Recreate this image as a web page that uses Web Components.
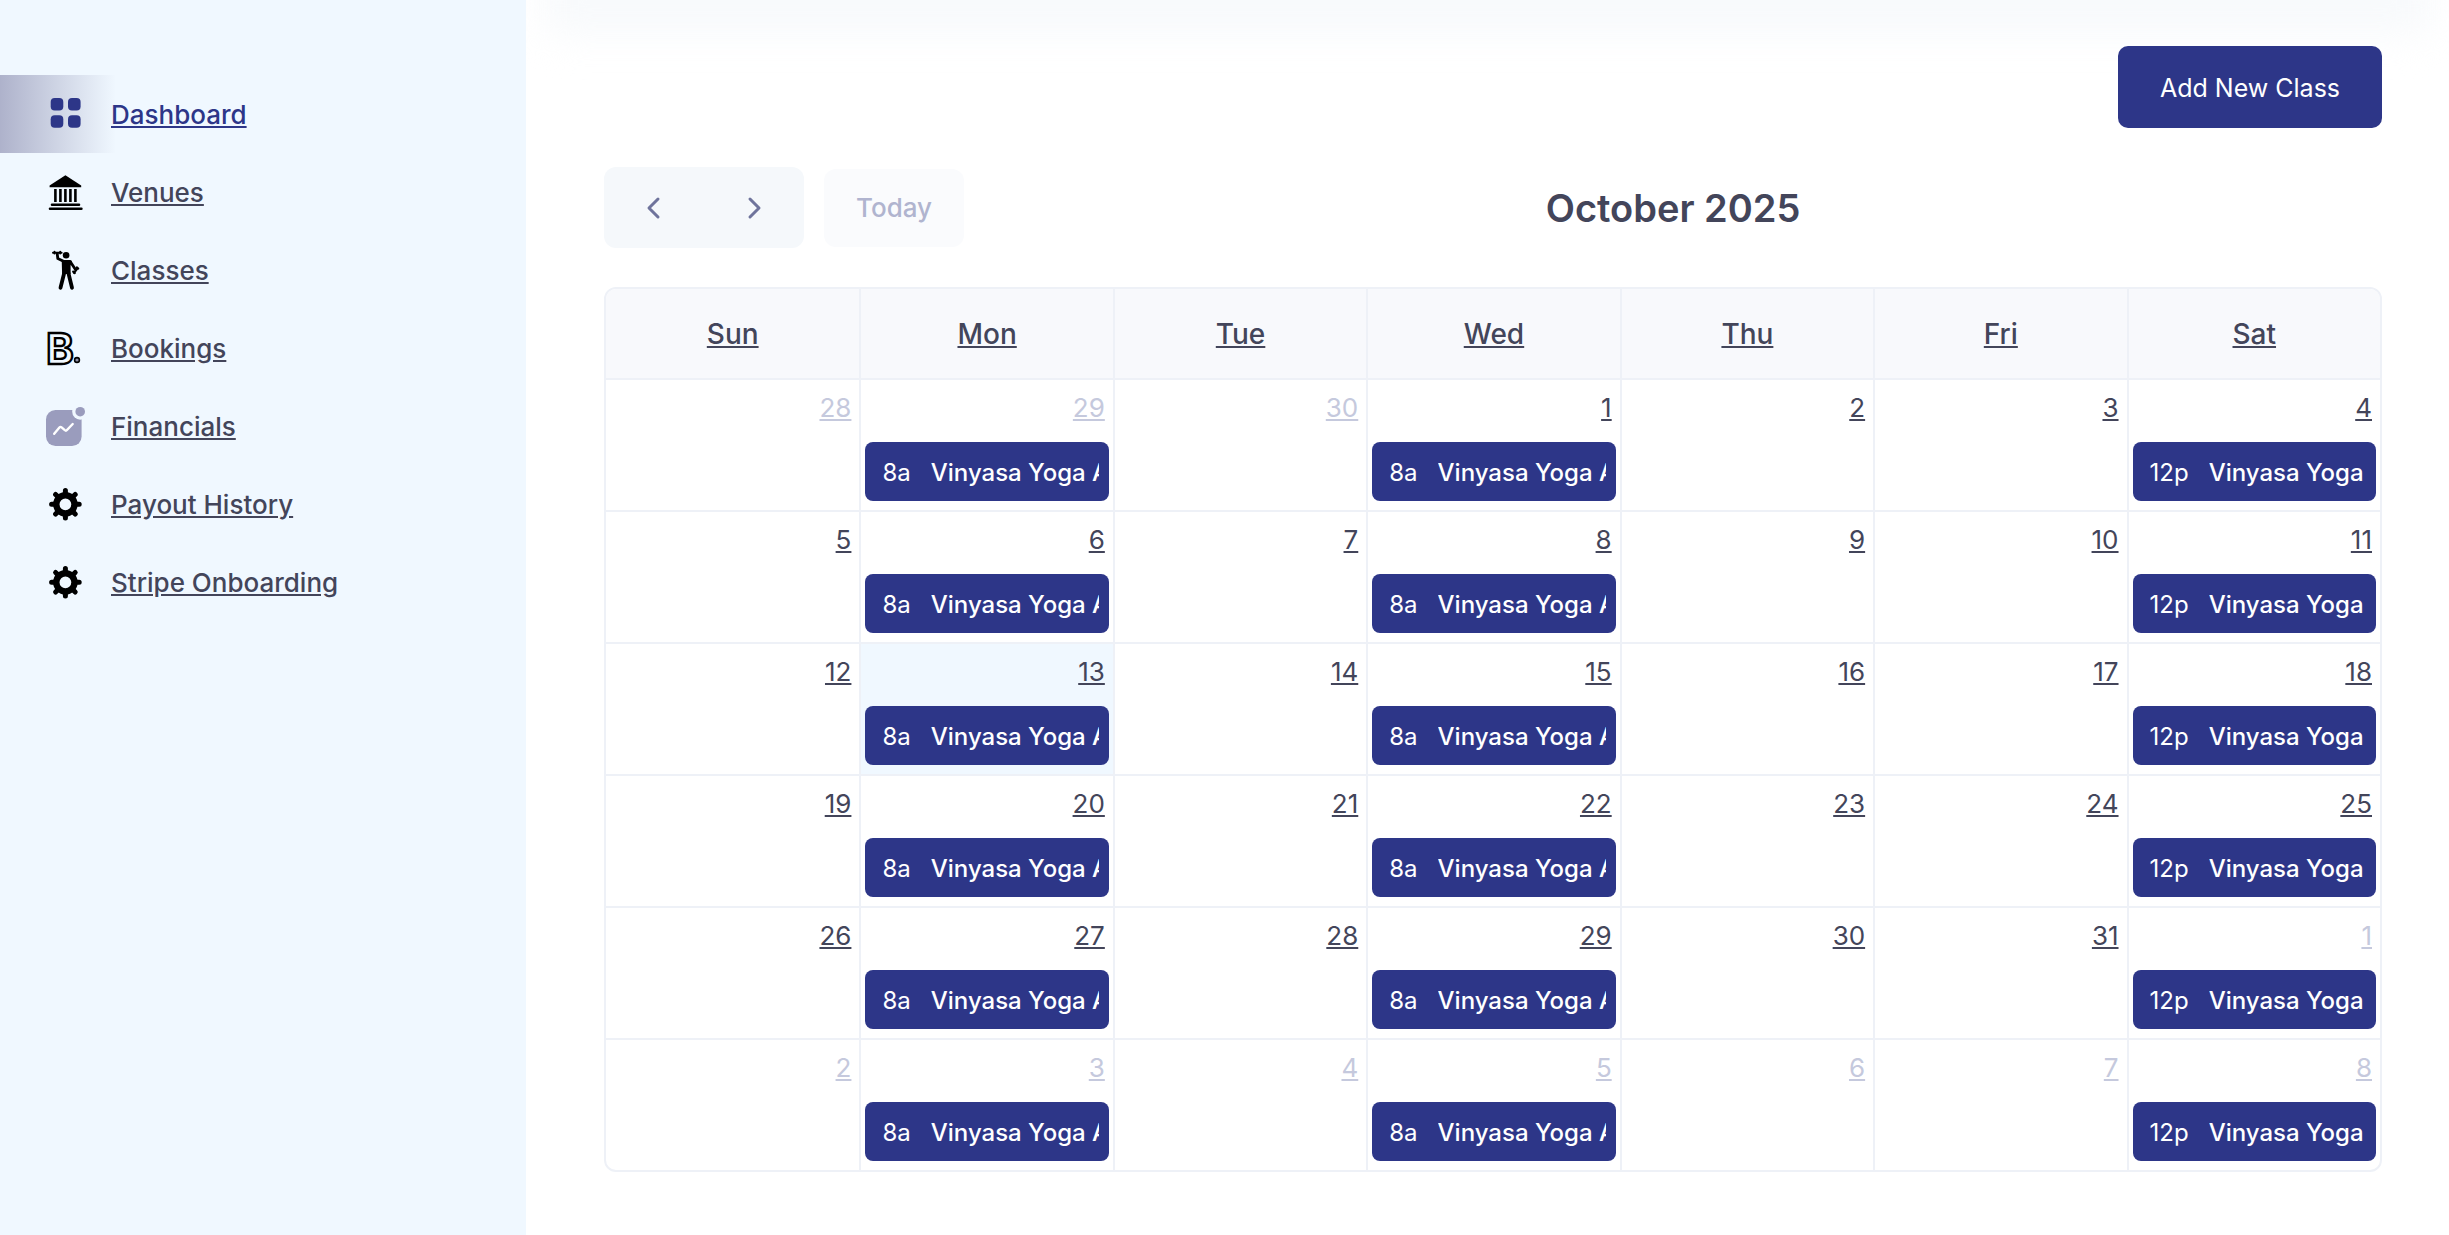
<!DOCTYPE html>
<html lang="en">
<head>
<meta charset="utf-8">
<title>Classes</title>
<style>
  body {
    margin: 0;
    font: 400 26px/32px Inter, "Liberation Sans", sans-serif;
    color: #43455a;
    background: #fff;
    --navy: #2d3688;
    --sky: #f0f8ff;
    --line: #eef1f7;
    --muted: #c5c9dd;
  }
</style>
</head>
<body>
<app-shell>
  <side-nav slot="side">
    <nav-item icon="grid" active>Dashboard</nav-item>
    <nav-item icon="venue">Venues</nav-item>
    <nav-item icon="trainer">Classes</nav-item>
    <nav-item icon="booking">Bookings</nav-item>
    <nav-item icon="chart">Financials</nav-item>
    <nav-item icon="gear">Payout History</nav-item>
    <nav-item icon="gear">Stripe Onboarding</nav-item>
  </side-nav>
  <primary-button>Add New Class</primary-button>
  <calendar-toolbar>October 2025</calendar-toolbar>
  <month-calendar year="2025" month="10" today="13"></month-calendar>
</app-shell>

<script>
const ICONS = {
  grid: `
    <g fill="#2d3688">
      <rect x="4.7" y="4" width="12.6" height="12.6" rx="4"/>
      <rect x="22" y="4" width="12.6" height="12.6" rx="4"/>
      <rect x="4.7" y="21.2" width="12.6" height="12.6" rx="4"/>
      <rect x="22" y="21.2" width="12.6" height="12.6" rx="4"/>
    </g>`,
  venue: `
    <path d="M19.4 3.2 35.2 13.6v1.6H3.6v-1.6z"/>
    <path d="M9.4 17v13M14.4 17v13M19.4 17v13M24.4 17v13M29.4 17v13" stroke="#000" stroke-width="2.6"/>
    <path d="M6 32.7h27M4 36.7h31.4" stroke="#000" stroke-width="2.6" stroke-linecap="round"/>`,
  trainer: `
    <circle cx="20.1" cy="5.3" r="3.3"/>
    <path d="M15.7 10h8.2c1.3 0 2 .8 2 2l-1.3 3.5V24h-8.5z"/>
    <g fill="none" stroke="#000" stroke-linecap="round" stroke-linejoin="round">
      <path d="M7 2.7h8.6M8.5 1.8v1.8M14.2 1.8v1.8" stroke-width="2"/>
      <path d="M11.2 3.5l.6 5 5.7 2.7M24.5 12l4.8 7.2" stroke-width="2.8"/>
      <path d="M28 22.8l3.7-4.8M27.2 21.6l1.6 1.5M30.8 17.4l1.4 1.2" stroke-width="2.2"/>
      <path d="M18.2 23l-3.7 14.8M22.4 23l3.6 14.8" stroke-width="3.8"/>
    </g>`,
  booking: `
    <text x="0" y="35.5" font-family="Inter, sans-serif" font-size="42" font-weight="700" fill="none" stroke="#000" stroke-width="2.4">B</text>
    <circle cx="31" cy="32" r="2.4" fill="#8d90a8" stroke="#000" stroke-width="1.6"/>`,
  chart: `
    <rect y="4" width="35.6" height="36" rx="9.5" fill="#9a9cbd"/>
    <circle cx="34.2" cy="5.7" r="8" fill="#f0f8ff"/>
    <circle cx="34.2" cy="5.7" r="4.8" fill="#9a9cbd"/>
    <path d="M8.2 27.8l5.2-6.2q1-1.2 2.200-.2l3.2 2.8q1.2 1 2.2-.2l5.7-6" fill="none" stroke="#fff" stroke-width="2.4" stroke-linecap="round"/>`,
  gear: `
    <g fill="none" stroke="#000">
      <circle cx="19.4" cy="20.3" r="9.1" stroke-width="6.4"/>
      <path transform="translate(19.4 20.3)" stroke-width="5" stroke-linecap="round"
        d="M0-11v-2.8M0 11v2.8M-11 0h-2.8M11 0h2.8M-8-8l-1.8-1.8M8 8l1.8 1.8M-8 8l-1.8 1.8M8-8l1.8-1.8"/>
    </g>`
};

class AppShell extends HTMLElement {
  constructor () {
    super();
    this.attachShadow({ mode: 'open' }).innerHTML = `
      <style>
        :host {
          display: flex;
          min-height: 100vh;
        }
        main {
          position: relative;
          flex: 1;
          min-width: 0;
          display: flex;
          flex-direction: column;
          gap: 39px;
          padding: 46px 67px 63px 78px;
          box-sizing: border-box;
          overflow: hidden;
        }
        /* soft lower edge of the bar above the page */
        main::before {
          content: '';
          position: absolute;
          top: -100px;
          left: 16px;
          right: 16px;
          height: 136px;
          border-radius: 20px;
          background: #f8fafc;
          filter: blur(18px);
        }
      </style>
      <slot name="side"></slot>
      <main><slot></slot></main>`;
  }
}

class SideNav extends HTMLElement {
  constructor () {
    super();
    this.attachShadow({ mode: 'open' }).innerHTML = `
      <style>
        :host {
          display: block;
          flex: 0 0 526px;
          box-sizing: border-box;
          padding-top: 75px;
          background: var(--sky);
        }
      </style>
      <nav><slot></slot></nav>`;
  }
}

class NavItem extends HTMLElement {
  constructor () {
    super();
    this.attachShadow({ mode: 'open' }).innerHTML = `
      <style>
        :host {
          display: block;
        }
        a {
          display: flex;
          align-items: center;
          gap: 25px;
          height: 78px;
          padding-left: 46px;
          color: inherit;
          font-weight: 500;
          text-decoration: none;
        }
        span {
          padding-top: 2px;
          text-decoration: underline;
        }
        svg {
          width: 40px;
          height: 40px;
          overflow: visible;
        }
        :host([active]) a {
          color: var(--navy);
          background: linear-gradient(90deg, #aeb2cb, rgba(240, 248, 255, 0)) no-repeat 0 0 / 116px 100%;
        }
      </style>
      <a href="#">
        <svg viewBox="0 0 40 40" aria-hidden="true">${ICONS[this.getAttribute('icon')]}</svg>
        <span><slot></slot></span>
      </a>`;
  }
}

class PrimaryButton extends HTMLElement {
  constructor () {
    super();
    this.attachShadow({ mode: 'open' }).innerHTML = `
      <style>
        :host {
          position: relative;
          align-self: flex-end;
        }
        button {
          display: block;
          min-width: 264px;
          padding: 26px 40px 24px;
          border: 0;
          border-radius: 10px;
          background: var(--navy);
          color: #fff;
          font: inherit;
          font-size: 25px;
        }
      </style>
      <button type="button"><slot></slot></button>`;
  }
}

class CalendarToolbar extends HTMLElement {
  constructor () {
    super();
    this.attachShadow({ mode: 'open' }).innerHTML = `
      <style>
        :host {
          display: flex;
          align-items: center;
        }
        .group {
          display: flex;
          margin-right: 20px;
          border-radius: 12px;
          background: #f5f8fb;
        }
        button {
          border: 0;
          background: none;
          font: inherit;
        }
        .group button {
          display: grid;
          place-items: center;
          width: 100px;
          height: 81px;
          padding: 0;
        }
        svg {
          width: 24px;
          height: 24px;
          fill: none;
          stroke: #6f749c;
          stroke-width: 3;
          stroke-linecap: round;
          stroke-linejoin: round;
        }
        .today {
          padding: 23px 32px;
          border-radius: 12px;
          background: #fafbfd;
          color: #b0b4cf;
          font-weight: 500;
        }
        h2 {
          flex: 1;
          margin: 0;
          text-align: center;
          font-size: 38px;
          line-height: 46px;
          font-weight: 600;
        }
      </style>
      <div class="group">
        <button type="button" aria-label="Previous month"><svg viewBox="0 0 24 24"><path d="M16 3l-9 9 9 9"/></svg></button>
        <button type="button" aria-label="Next month"><svg viewBox="0 0 24 24"><path d="M8 3l9 9-9 9"/></svg></button>
      </div>
      <button type="button" class="today" disabled>Today</button>
      <h2><slot></slot></h2>`;
  }
}

class ClassEvent extends HTMLElement {
  constructor () {
    super();
    this.attachShadow({ mode: 'open' }).innerHTML = `
      <style>
        :host {
          display: block;
        }
        a {
          display: flex;
          gap: 20px;
          padding: 15px 10px 13px 17px;
          border-radius: 8px;
          background: var(--navy);
          color: #fff;
          font-size: 24px;
          line-height: 31px;
          text-decoration: none;
          white-space: nowrap;
        }
        .title {
          flex: 1;
          min-width: 0;
          overflow: hidden;
          font-weight: 500;
        }
      </style>
      <a href="#"><span>${this.getAttribute('time')}</span><span class="title"><slot></slot></span></a>`;
  }
}

class MonthCalendar extends HTMLElement {
  constructor () {
    super();
    this.attachShadow({ mode: 'open' });
    this.render();
  }

  renderDay (date) {
    const month = Number(this.getAttribute('month')) - 1;
    const inMonth = date.getMonth() === month;
    const isToday = inMonth && date.getDate() === Number(this.getAttribute('today'));
    const time = { 1: '8a', 3: '8a', 6: '12p' }[date.getDay()];
    const event = time ? `<class-event time="${time}">Vinyasa Yoga A</class-event>` : '';
    return `
      <td class="${inMonth ? '' : 'other'} ${isToday ? 'today' : ''}">
        <a class="num" href="#">${date.getDate()}</a>${event}
      </td>`;
  }

  render () {
    const year = Number(this.getAttribute('year'));
    const month = Number(this.getAttribute('month')) - 1;
    const offset = new Date(year, month, 1).getDay();
    const names = ['Sun', 'Mon', 'Tue', 'Wed', 'Thu', 'Fri', 'Sat'];
    let rows = '';
    for (let week = 0; week < 6; week++) {
      rows += '<tr>';
      for (let day = 0; day < 7; day++) {
        rows += this.renderDay(new Date(year, month, week * 7 + day + 1 - offset));
      }
      rows += '</tr>';
    }
    this.shadowRoot.innerHTML = `
      <style>
        :host {
          display: block;
          border: 2px solid var(--line);
          border-radius: 12px;
          overflow: hidden;
        }
        table {
          width: 100%;
          table-layout: fixed;
          border-spacing: 0;
        }
        th, td {
          box-sizing: border-box;
          border-left: 2px solid var(--line);
        }
        th:first-child, td:first-child {
          border-left: 0;
        }
        th {
          height: 89px;
          padding: 0;
          background: #f8f9fc;
          font-size: 28px;
          line-height: 34px;
          font-weight: 500;
        }
        td {
          height: 132px;
          padding: 12px 4px 8px;
          border-top: 2px solid var(--line);
          vertical-align: top;
        }
        a {
          color: inherit;
        }
        .num {
          display: block;
          width: fit-content;
          margin: 0 4px 18px auto;
        }
        .other .num {
          color: var(--muted);
        }
        .today {
          background: var(--sky);
        }
      </style>
      <table>
        <thead><tr>${names.map(name => `<th scope="col"><a href="#">${name}</a></th>`).join('')}</tr></thead>
        <tbody>${rows}</tbody>
      </table>`;
  }
}

window.customElements.define('app-shell', AppShell);
window.customElements.define('side-nav', SideNav);
window.customElements.define('nav-item', NavItem);
window.customElements.define('primary-button', PrimaryButton);
window.customElements.define('calendar-toolbar', CalendarToolbar);
window.customElements.define('class-event', ClassEvent);
window.customElements.define('month-calendar', MonthCalendar);
</script>
</body>
</html>
